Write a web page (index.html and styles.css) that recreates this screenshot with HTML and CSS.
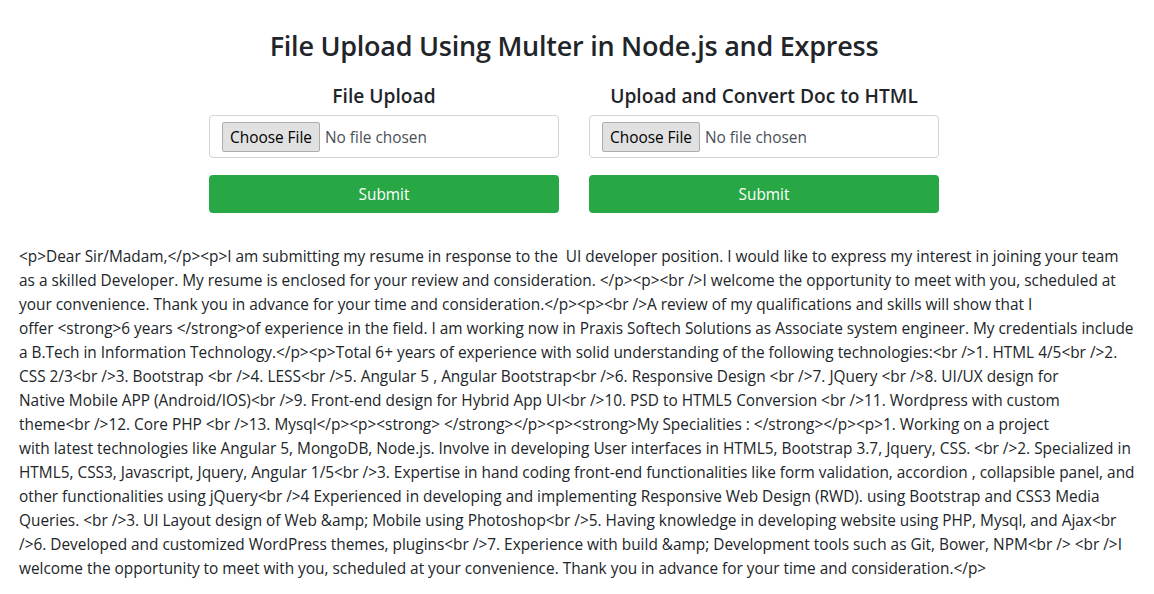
FILE: index.html
```html
<!DOCTYPE html>
<html lang="en">
<head>
<meta charset="utf-8">
<title>File Upload Using Multer in Node.js and Express</title>
<link rel="stylesheet" href="styles.css">
</head>
<body>
<div class="container">
  <h3 class="title">File Upload Using Multer in Node.js and Express</h3>
  <div class="forms">
    <form class="upload-form">
      <h5 class="form-title">File Upload</h5>
      <div class="file-box"><input class="file-input" type="file"></div>
      <button class="submit" type="button">Submit</button>
    </form>
    <form class="upload-form">
      <h5 class="form-title">Upload and Convert Doc to HTML</h5>
      <div class="file-box"><input class="file-input" type="file"></div>
      <button class="submit" type="button">Submit</button>
    </form>
  </div>
  <p class="output">&lt;p&gt;Dear Sir/Madam,&lt;/p&gt;&lt;p&gt;I am submitting my resume in response to the &nbsp;UI developer position. I would like to express my interest in joining your team<br>as a skilled Developer. My resume is enclosed for your review and consideration. &lt;/p&gt;&lt;p&gt;&lt;br /&gt;I welcome the opportunity to meet with you, scheduled at<br>your convenience. Thank you in advance for your time and consideration.&lt;/p&gt;&lt;p&gt;&lt;br /&gt;A review of my qualifications and skills will show that I<br>offer &lt;strong&gt;6 years &lt;/strong&gt;of experience in the field. I am working now in Praxis Softech Solutions as Associate system engineer. My credentials include<br>a B.Tech in Information Technology.&lt;/p&gt;&lt;p&gt;Total 6+ years of experience with solid understanding of the following technologies:&lt;br /&gt;1. HTML 4/5&lt;br /&gt;2.<br>CSS 2/3&lt;br /&gt;3. Bootstrap &lt;br /&gt;4. LESS&lt;br /&gt;5. Angular 5 , Angular Bootstrap&lt;br /&gt;6. Responsive Design &lt;br /&gt;7. JQuery &lt;br /&gt;8. UI/UX design for<br>Native Mobile APP (Android/IOS)&lt;br /&gt;9. Front-end design for Hybrid App UI&lt;br /&gt;10. PSD to HTML5 Conversion &lt;br /&gt;11. Wordpress with custom<br>theme&lt;br /&gt;12. Core PHP &lt;br /&gt;13. Mysql&lt;/p&gt;&lt;p&gt;&lt;strong&gt; &lt;/strong&gt;&lt;/p&gt;&lt;p&gt;&lt;strong&gt;My Specialities : &lt;/strong&gt;&lt;/p&gt;&lt;p&gt;1. Working on a project<br>with latest technologies like Angular 5, MongoDB, Node.js. Involve in developing User interfaces in HTML5, Bootstrap 3.7, Jquery, CSS. &lt;br /&gt;2. Specialized in<br>HTML5, CSS3, Javascript, Jquery, Angular 1/5&lt;br /&gt;3. Expertise in hand coding front-end functionalities like form validation, accordion , collapsible panel, and<br>other functionalities using jQuery&lt;br /&gt;4 Experienced in developing and implementing Responsive Web Design (RWD). using Bootstrap and CSS3 Media<br>Queries. &lt;br /&gt;3. UI Layout design of Web &amp;amp; Mobile using Photoshop&lt;br /&gt;5. Having knowledge in developing website using PHP, Mysql, and Ajax&lt;br<br>/&gt;6. Developed and customized WordPress themes, plugins&lt;br /&gt;7. Experience with build &amp;amp; Development tools such as Git, Bower, NPM&lt;br /&gt; &lt;br /&gt;I<br>welcome the opportunity to meet with you, scheduled at your convenience. Thank you in advance for your time and consideration.&lt;/p&gt;</p>
</div>
</body>
</html>
```

FILE: styles.css
```css
* { box-sizing: border-box; }
html, body { margin: 0; padding: 0; background: #fff; }
body {
  font-family: "Open Sans", "Noto Sans", "Liberation Sans", sans-serif;
  font-size: 16px;
  color: #212529;
}
.container {
  width: 1140px;
  margin-left: 4px;
  padding: 0 15px;
}
.title {
  margin: 29px 0 21px;
  font-size: 27px;
  line-height: 34px;
  font-weight: 600;
  text-align: center;
  letter-spacing: -0.25px;
}
.forms {
  display: grid;
  grid-template-columns: 350px 350px;
  column-gap: 30px;
  justify-content: center;
}
.upload-form { margin: 0; }
.form-title {
  margin: 0 0 7px;
  font-size: 19.2px;
  line-height: 24px;
  font-weight: 600;
  text-align: center;
}
.file-box {
  height: 43px;
  border: 1px solid #ced4da;
  border-radius: 4px;
  padding: 6px 12px;
  display: flex;
  align-items: center;
}
.file-input {
  font-family: inherit;
  font-size: 15.4px;
  color: #495057;
}
.file-input::file-selector-button {
  font-family: inherit;
  font-size: 15.4px;
  color: #000;
  height: 30px;
  padding: 1px 7px 0;
  margin-right: 5px;
  background: #e1e1e1;
  border: 1px solid #adadad;
  border-radius: 2px;
}
.submit {
  display: block;
  width: 100%;
  height: 38px;
  margin-top: 17px;
  background: #28a745;
  color: #fff;
  border: none;
  border-radius: 4px;
  font-family: inherit;
  font-size: 15.4px;
}
.output {
  margin: 32px 0 0;
  font-size: 15.4px;
  line-height: 24px;
  white-space: nowrap;
}
```
